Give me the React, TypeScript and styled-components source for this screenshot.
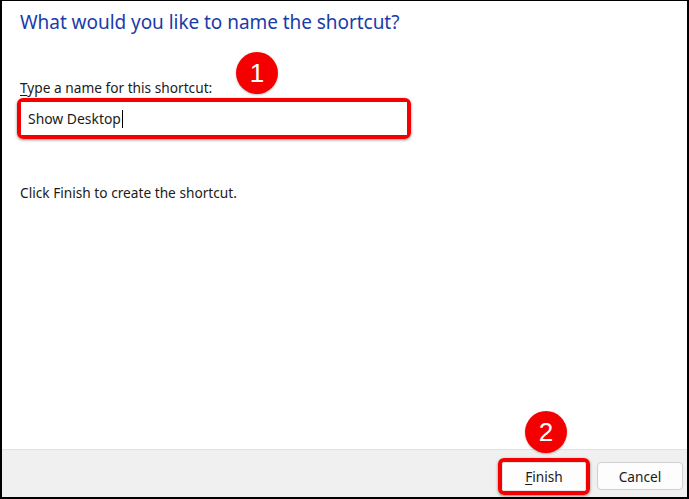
import React from "react";
import styled, { createGlobalStyle } from "styled-components";

const Global = createGlobalStyle`
  html, body { margin: 0; padding: 0; background: #ffffff; }
  body { font-family: "Noto Sans", "Open Sans", sans-serif; }
  * { box-sizing: border-box; }
`;

const RED = "#f50000";

const Window = styled.div`
  position: relative;
  width: 689px;
  height: 499px;
  border-style: solid;
  border-color: #000;
  border-width: 1px 2px 2px 2px;
  background: #fff;
  display: flex;
  flex-direction: column;
`;

const Content = styled.div`
  flex: 1;
  display: flex;
  flex-direction: column;
  padding: 8px 0 0 18px;
`;

const Title = styled.h1`
  margin: 0;
  font-weight: 400;
  font-size: 19px;
  line-height: 26px;
  color: #1a3ca8;
  letter-spacing: -0.05px;
`;

const Label = styled.label`
  margin-top: 44px;
  font-size: 13.7px;
  line-height: 18px;
  color: #1b1b1b;
`;

const Accel = styled.span`
  text-decoration: underline;
  text-underline-offset: 2px;
`;

const Highlight = styled.div<{ $w: number; $h: number }>`
  width: ${(p) => p.$w}px;
  height: ${(p) => p.$h}px;
  border: 4px solid ${RED};
  border-radius: 6px;
  box-shadow: 0 1px 3px rgba(0, 0, 0, 0.45);
  display: flex;
  align-items: stretch;
`;

const InputHighlight = styled(Highlight)`
  margin-top: 1px;
  margin-left: -3px;
`;

const NameInput = styled.div`
  flex: 1;
  display: flex;
  align-items: center;
  padding-left: 7px;
  font-size: 13.9px;
  color: #1b1b1b;
  background: #fff;
`;

const Caret = styled.span`
  display: inline-block;
  width: 1px;
  height: 18px;
  background: #000;
  margin-left: 1px;
`;

const Info = styled.p`
  margin: 45px 0 0 0;
  font-size: 13.7px;
  line-height: 18px;
  color: #1b1b1b;
`;

const Footer = styled.div`
  height: 48px;
  background: #f0f0f0;
  border-top: 1px solid #e2e2e2;
  display: flex;
  justify-content: flex-end;
  align-items: center;
  gap: 7px;
  padding: 5px 4px 0 0;
`;

const Button = styled.div<{ $plain?: boolean }>`
  display: flex;
  align-items: center;
  justify-content: center;
  font-size: 13.7px;
  color: #1b1b1b;
  background: #fdfdfd;
  border-radius: 4px;
  ${(p) =>
    p.$plain
      ? `width: 86px; height: 28px; border: 1px solid #d0d0d0;`
      : `flex: 1; border: 1px solid #e4e4e4; border-radius: 2px;`}
`;

const Badge = styled.div<{ $x: number; $y: number }>`
  position: absolute;
  left: ${(p) => p.$x - 21}px;
  top: ${(p) => p.$y - 21}px;
  width: 42px;
  height: 42px;
  border-radius: 50%;
  background: ${RED};
  color: #fff;
  display: flex;
  align-items: center;
  justify-content: center;
  font-family: "Liberation Sans", Arial, sans-serif;
  font-size: 26px;
  line-height: 1;
  box-shadow: 0 1px 2px rgba(0, 0, 0, 0.25);
`;

export default function App() {
  return (
    <>
      <Global />
      <Window>
        <Content>
          <Title>What would you like to name the shortcut?</Title>
          <Label>
            <Accel>T</Accel>ype a name for this shortcut:
          </Label>
          <InputHighlight $w={394} $h={41}>
            <NameInput>
              Show Desktop
              <Caret />
            </NameInput>
          </InputHighlight>
          <Info>Click Finish to create the shortcut.</Info>
        </Content>
        <Footer>
          <Highlight $w={92} $h={37}>
            <Button>
              <Accel>F</Accel>inish
            </Button>
          </Highlight>
          <Button $plain>Cancel</Button>
        </Footer>
        <Badge $x={255} $y={72}>1</Badge>
        <Badge $x={544} $y={431}>2</Badge>
      </Window>
    </>
  );
}
